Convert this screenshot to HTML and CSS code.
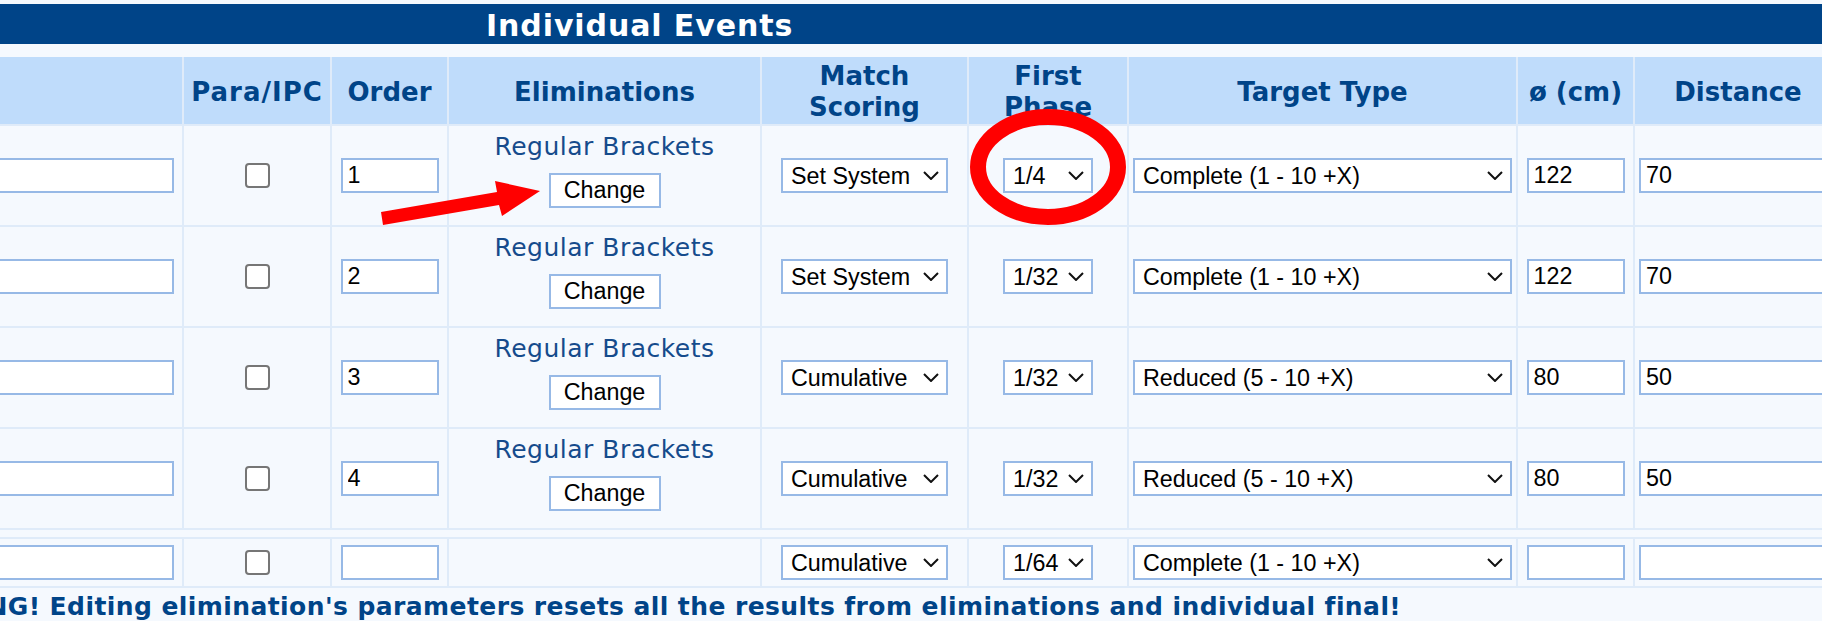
FILE: index.html
```html
<!DOCTYPE html>
<html lang="en">
<head>
    <meta charset="UTF-8">
    <title>Individual Events</title>
    <link rel="stylesheet" href="styles.css">
</head>
<body>
    <div class="title-bar">Individual Events</div>

    <table class="events">
        <thead>
            <tr>
                <th class="c-name"></th>
                <th class="c-para">Para/IPC</th>
                <th class="c-order">Order</th>
                <th class="c-elim">Eliminations</th>
                <th class="c-match">Match<br>Scoring</th>
                <th class="c-phase">First<br>Phase</th>
                <th class="c-target">Target Type</th>
                <th class="c-dia">ø (cm)</th>
                <th class="c-dist">Distance</th>
            </tr>
        </thead>
        <tbody>
            <tr class="ev-row">
                <td class="name-cell"><input type="text" class="txt name-input"></td>
                <td><input type="checkbox" class="chk"></td>
                <td><input type="text" class="txt short-input" value="1"></td>
                <td>
                    <div class="bracket-name">Regular Brackets</div>
                    <button class="change-btn">Change</button>
                </td>
                <td><span class="sel"><select class="sel-match"><option>Set System</option><option>Cumulative</option></select><svg class="chev" viewBox="0 0 16 9"><path d="M1 1 L8 8 L15 1"/></svg></span></td>
                <td><span class="sel"><select class="sel-phase"><option>1/4</option></select><svg class="chev" viewBox="0 0 16 9"><path d="M1 1 L8 8 L15 1"/></svg></span></td>
                <td><span class="sel"><select class="sel-target"><option>Complete (1 - 10 +X)</option></select><svg class="chev" viewBox="0 0 16 9"><path d="M1 1 L8 8 L15 1"/></svg></span></td>
                <td><input type="text" class="txt short-input" value="122"></td>
                <td class="dist-cell"><input type="text" class="txt dist-input" value="70"></td>
            </tr>
            <tr class="ev-row">
                <td class="name-cell"><input type="text" class="txt name-input"></td>
                <td><input type="checkbox" class="chk"></td>
                <td><input type="text" class="txt short-input" value="2"></td>
                <td>
                    <div class="bracket-name">Regular Brackets</div>
                    <button class="change-btn">Change</button>
                </td>
                <td><span class="sel"><select class="sel-match"><option>Set System</option></select><svg class="chev" viewBox="0 0 16 9"><path d="M1 1 L8 8 L15 1"/></svg></span></td>
                <td><span class="sel"><select class="sel-phase"><option>1/32</option></select><svg class="chev" viewBox="0 0 16 9"><path d="M1 1 L8 8 L15 1"/></svg></span></td>
                <td><span class="sel"><select class="sel-target"><option>Complete (1 - 10 +X)</option></select><svg class="chev" viewBox="0 0 16 9"><path d="M1 1 L8 8 L15 1"/></svg></span></td>
                <td><input type="text" class="txt short-input" value="122"></td>
                <td class="dist-cell"><input type="text" class="txt dist-input" value="70"></td>
            </tr>
            <tr class="ev-row">
                <td class="name-cell"><input type="text" class="txt name-input"></td>
                <td><input type="checkbox" class="chk"></td>
                <td><input type="text" class="txt short-input" value="3"></td>
                <td>
                    <div class="bracket-name">Regular Brackets</div>
                    <button class="change-btn">Change</button>
                </td>
                <td><span class="sel"><select class="sel-match"><option>Cumulative</option></select><svg class="chev" viewBox="0 0 16 9"><path d="M1 1 L8 8 L15 1"/></svg></span></td>
                <td><span class="sel"><select class="sel-phase"><option>1/32</option></select><svg class="chev" viewBox="0 0 16 9"><path d="M1 1 L8 8 L15 1"/></svg></span></td>
                <td><span class="sel"><select class="sel-target"><option>Reduced (5 - 10 +X)</option></select><svg class="chev" viewBox="0 0 16 9"><path d="M1 1 L8 8 L15 1"/></svg></span></td>
                <td><input type="text" class="txt short-input" value="80"></td>
                <td class="dist-cell"><input type="text" class="txt dist-input" value="50"></td>
            </tr>
            <tr class="ev-row">
                <td class="name-cell"><input type="text" class="txt name-input"></td>
                <td><input type="checkbox" class="chk"></td>
                <td><input type="text" class="txt short-input" value="4"></td>
                <td>
                    <div class="bracket-name">Regular Brackets</div>
                    <button class="change-btn">Change</button>
                </td>
                <td><span class="sel"><select class="sel-match"><option>Cumulative</option></select><svg class="chev" viewBox="0 0 16 9"><path d="M1 1 L8 8 L15 1"/></svg></span></td>
                <td><span class="sel"><select class="sel-phase"><option>1/32</option></select><svg class="chev" viewBox="0 0 16 9"><path d="M1 1 L8 8 L15 1"/></svg></span></td>
                <td><span class="sel"><select class="sel-target"><option>Reduced (5 - 10 +X)</option></select><svg class="chev" viewBox="0 0 16 9"><path d="M1 1 L8 8 L15 1"/></svg></span></td>
                <td><input type="text" class="txt short-input" value="80"></td>
                <td class="dist-cell"><input type="text" class="txt dist-input" value="50"></td>
            </tr>
        </tbody>
        <tbody>
            <tr class="spacer-row"><td colspan="9"></td></tr>
            <tr class="new-row">
                <td class="name-cell"><input type="text" class="txt name-input"></td>
                <td><input type="checkbox" class="chk"></td>
                <td><input type="text" class="txt short-input"></td>
                <td></td>
                <td><span class="sel"><select class="sel-match"><option>Cumulative</option></select><svg class="chev" viewBox="0 0 16 9"><path d="M1 1 L8 8 L15 1"/></svg></span></td>
                <td><span class="sel"><select class="sel-phase"><option>1/64</option></select><svg class="chev" viewBox="0 0 16 9"><path d="M1 1 L8 8 L15 1"/></svg></span></td>
                <td><span class="sel"><select class="sel-target"><option>Complete (1 - 10 +X)</option></select><svg class="chev" viewBox="0 0 16 9"><path d="M1 1 L8 8 L15 1"/></svg></span></td>
                <td><input type="text" class="txt short-input"></td>
                <td class="dist-cell"><input type="text" class="txt dist-input"></td>
            </tr>
        </tbody>
        <tfoot>
            <tr>
                <td colspan="9" class="warning">WARNING! Editing elimination's parameters resets all the results from eliminations and individual final!</td>
            </tr>
        </tfoot>
    </table>

    <!-- red marks drawn over the page -->
    <svg class="marks" width="1822" height="621" viewBox="0 0 1822 621">
        <polygon points="381,212 497,192 495,181 540,191 502,216 499,205 383,225" fill="#ff0000"/>
        <ellipse cx="1048" cy="167" rx="70" ry="50" fill="none" stroke="#ff0000" stroke-width="16"/>
    </svg>
</body>
</html>
```

FILE: styles.css
```css
html, body {
    margin: 0;
    padding: 0;
    overflow: hidden;
}

body {
    background-color: #f5f9fe;
    font-family: "DejaVu Sans", Verdana, sans-serif;
    position: relative;
    height: 621px;
}

.title-bar {
    margin-top: 4px;
    height: 40px;
    line-height: 44px;
    background-color: #004488;
    color: #fff;
    font-size: 30px;
    font-weight: bold;
    letter-spacing: 0.9px;
    padding-left: 486px;
    white-space: nowrap;
    overflow: hidden;
}

.events {
    margin-top: 13px;
    margin-left: -140px;
    width: 1983px;
    table-layout: fixed;
    border-collapse: separate;
    border-spacing: 0;
}

.events th,
.events td {
    box-sizing: border-box;
    padding: 0;
    border-right: 2px solid #dfebf9;
    border-bottom: 2px solid #dfebf9;
    background-color: #f5f9fe;
    text-align: center;
    vertical-align: middle;
}

.events th {
    background-color: #bfdcfb;
    color: #004488;
    font-size: 26px;
    font-weight: bold;
    line-height: 31px;
    padding-top: 3px;
}

.events thead tr { height: 69px; }
.ev-row { height: 101px; }
.spacer-row { height: 9px; }
.new-row { height: 49px; }

/* column widths, border included */
.c-name { width: 324px; }
.c-para { width: 148px; letter-spacing: 1px; }
.c-order { width: 117px; }
.c-elim { width: 313px; }
.c-match { width: 207px; }
.c-phase { width: 160px; }
.c-target { width: 389px; }
.c-dia { width: 117px; }
.c-dist { width: 208px; }

.txt {
    box-sizing: border-box;
    height: 35px;
    border: 2px solid #97b9e6;
    background: #fff;
    font-family: "Liberation Sans", Arial, sans-serif;
    font-size: 23.3px;
    color: #000;
    padding: 0 5px;
    margin: 0;
    vertical-align: middle;
    outline: none;
}

.name-cell {
    text-align: right !important;
    padding-right: 8px !important;
}

.name-input { width: 300px; }
.short-input { width: 98px; }

.dist-cell {
    text-align: left !important;
    padding-left: 4px !important;
}

.dist-input { width: 200px; }

.chk {
    appearance: none;
    -webkit-appearance: none;
    box-sizing: border-box;
    width: 25px;
    height: 25px;
    margin: 0;
    border: 2px solid #767676;
    border-radius: 4px;
    background: #fff;
    vertical-align: middle;
}

.bracket-name {
    color: #154b8c;
    font-size: 25px;
    letter-spacing: 0.5px;
    line-height: 29px;
    white-space: nowrap;
}

.change-btn {
    display: block;
    margin: 12px auto 11px;
    box-sizing: border-box;
    width: 112px;
    height: 35px;
    border: 2px solid #97b9e6;
    background: #fff;
    font-family: "Liberation Sans", Arial, sans-serif;
    font-size: 23.3px;
    color: #000;
    padding: 0;
}

.sel {
    position: relative;
    display: inline-block;
    vertical-align: middle;
    line-height: 0;
}

.sel select {
    appearance: none;
    -webkit-appearance: none;
    box-sizing: border-box;
    height: 35px;
    border: 2px solid #97b9e6;
    border-radius: 0;
    background: #fff;
    font-family: "Liberation Sans", Arial, sans-serif;
    font-size: 23.3px;
    color: #000;
    padding: 0 0 0 8px;
    margin: 0;
    outline: none;
}

.sel-match { width: 167px; }
.sel-phase { width: 90px; }
.sel-target { width: 379px; }

.chev {
    position: absolute;
    right: 9px;
    top: 13px;
    width: 16px;
    height: 9px;
    pointer-events: none;
}

.chev path {
    fill: none;
    stroke: #111;
    stroke-width: 2;
}

.events td.warning {
    border: none;
    background: transparent;
    text-align: left;
    padding: 4px 0 0 29px;
    color: #004488;
    font-size: 25px;
    letter-spacing: 0.42px;
    font-weight: bold;
    white-space: nowrap;
}

.marks {
    position: absolute;
    left: 0;
    top: 0;
    pointer-events: none;
}
```
